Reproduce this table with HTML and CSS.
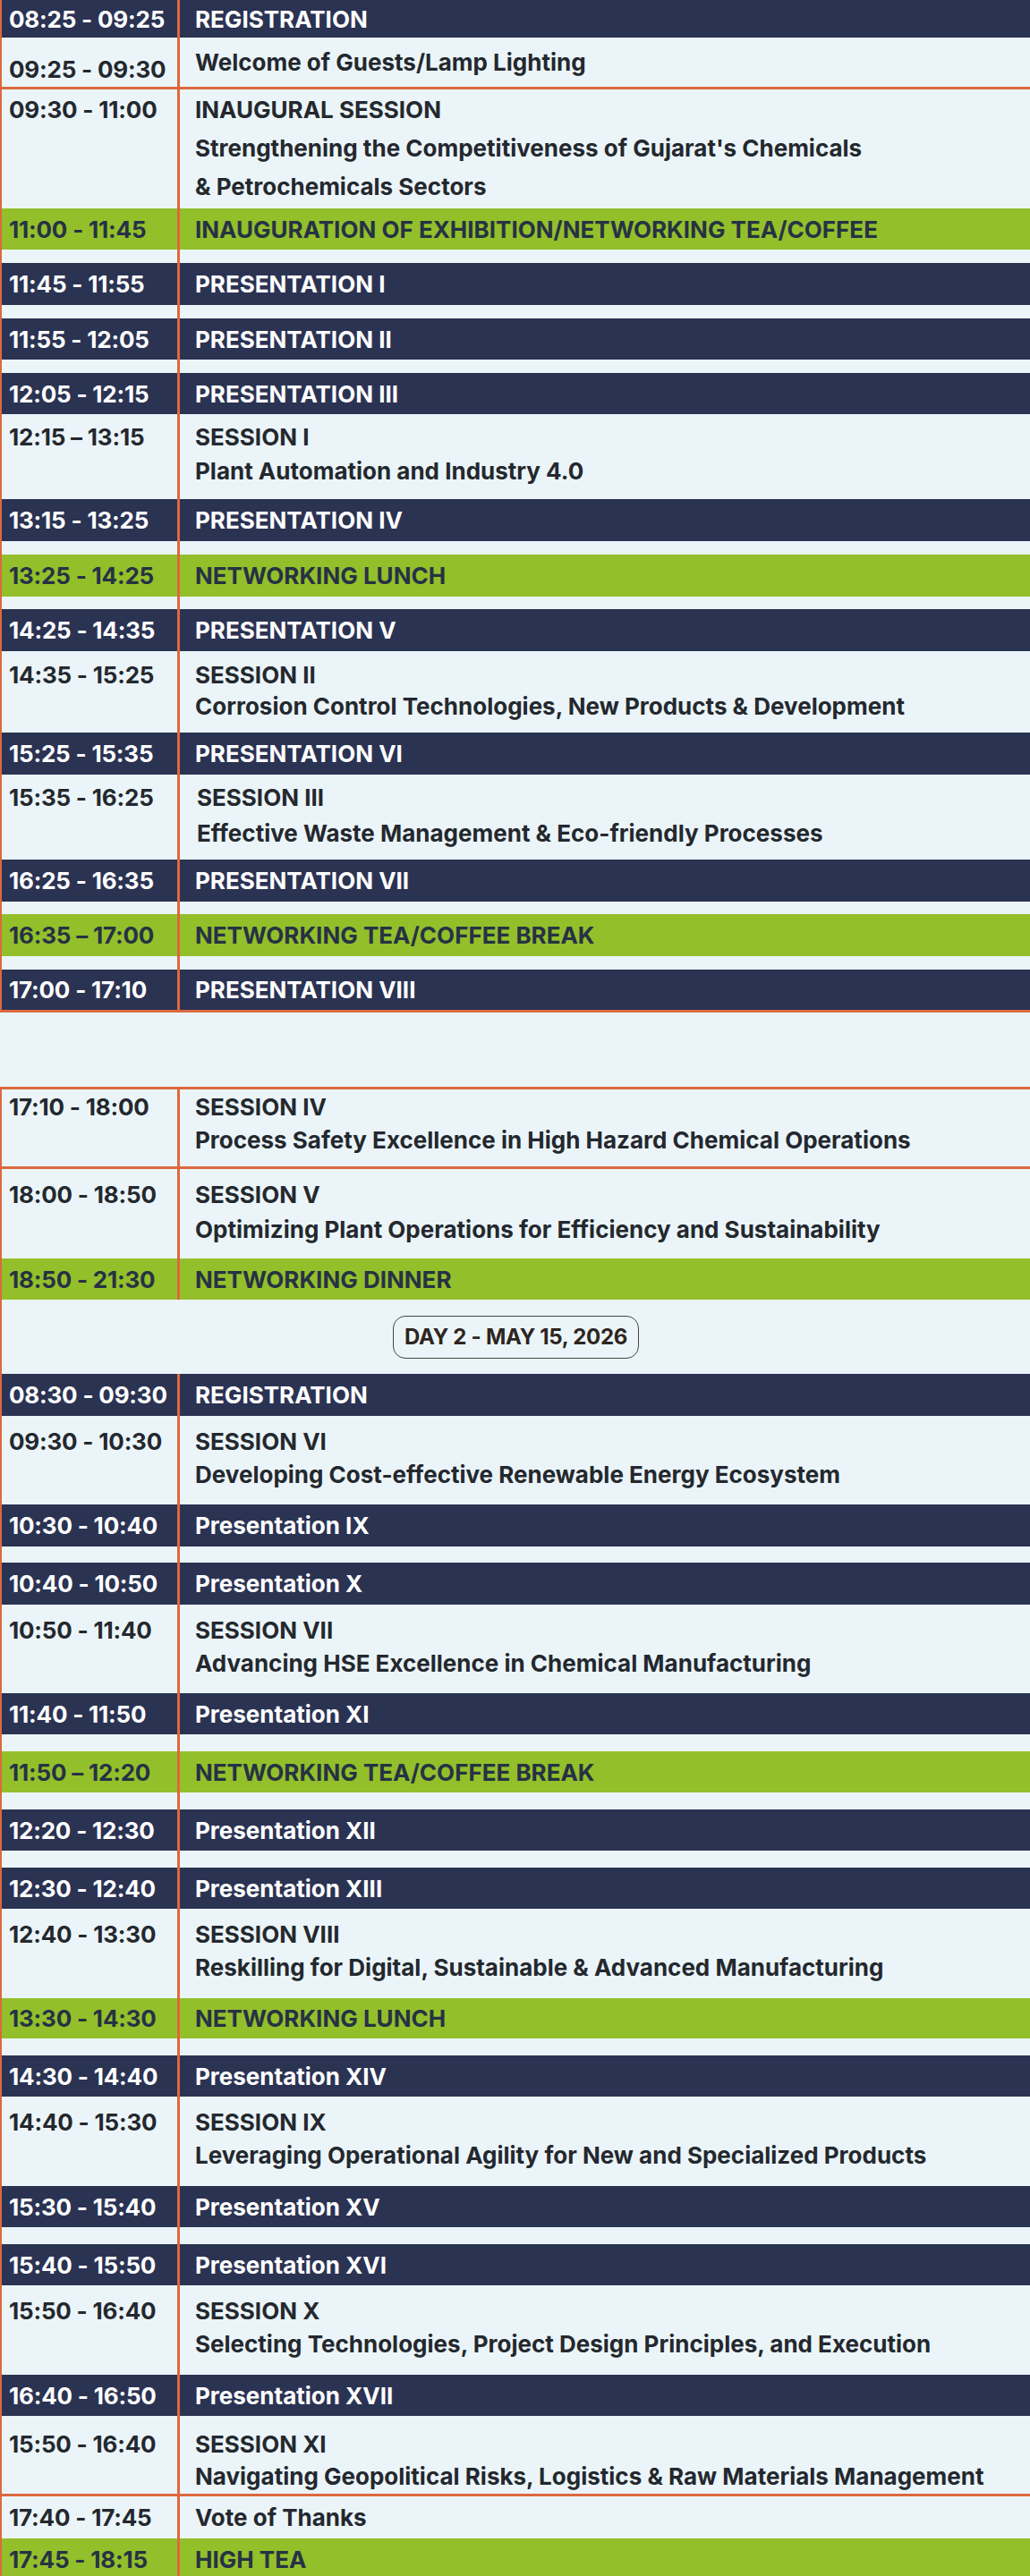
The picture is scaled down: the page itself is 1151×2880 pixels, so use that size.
FILE: index.html
```html
<!DOCTYPE html>
<html lang="en">
<head>
<meta charset="utf-8">
<title>Conference Agenda</title>
<link rel="stylesheet" href="styles.css">
</head>
<body>
<div class="sched day1">
  <div class="row band navy h42"><div class="time">08:25 - 09:25</div><div class="desc">REGISTRATION</div></div>
  <div class="row plain welcome rule"><div class="time low">09:25 - 09:30</div><div class="desc">Welcome of Guests/Lamp Lighting</div></div>
  <div class="row session inaug"><div class="time">09:30 - 11:00</div><div class="desc"><div>INAUGURAL SESSION</div><div>Strengthening the Competitiveness of Gujarat's Chemicals</div><div>&amp; Petrochemicals Sectors</div></div></div>
  <div class="row band green"><div class="time">11:00 - 11:45</div><div class="desc">INAUGURATION OF EXHIBITION/NETWORKING TEA/COFFEE</div></div>
  <div class="gap"></div>
  <div class="row band navy h47"><div class="time">11:45 - 11:55</div><div class="desc">PRESENTATION I</div></div>
  <div class="gap"></div>
  <div class="row band navy"><div class="time">11:55 - 12:05</div><div class="desc">PRESENTATION II</div></div>
  <div class="gap"></div>
  <div class="row band navy"><div class="time">12:05 - 12:15</div><div class="desc">PRESENTATION III</div></div>
  <div class="row session s1"><div class="time">12:15 – 13:15</div><div class="desc"><div>SESSION I</div><div>Plant Automation and Industry 4.0</div></div></div>
  <div class="row band navy h47"><div class="time">13:15 - 13:25</div><div class="desc">PRESENTATION IV</div></div>
  <div class="gap"></div>
  <div class="row band green h47"><div class="time">13:25 - 14:25</div><div class="desc">NETWORKING LUNCH</div></div>
  <div class="gap g14"></div>
  <div class="row band navy h47"><div class="time">14:25 - 14:35</div><div class="desc">PRESENTATION V</div></div>
  <div class="row session s2"><div class="time">14:35 - 15:25</div><div class="desc"><div>SESSION II</div><div>Corrosion Control Technologies, New Products &amp; Development</div></div></div>
  <div class="row band navy h47"><div class="time">15:25 - 15:35</div><div class="desc">PRESENTATION VI</div></div>
  <div class="row session s3"><div class="time">15:35 - 16:25</div><div class="desc shift"><div>SESSION III</div><div>Effective Waste Management &amp; Eco-friendly Processes</div></div></div>
  <div class="row band navy h47"><div class="time">16:25 - 16:35</div><div class="desc">PRESENTATION VII</div></div>
  <div class="gap g14"></div>
  <div class="row band green h47"><div class="time">16:35 – 17:00</div><div class="desc">NETWORKING TEA/COFFEE BREAK</div></div>
  <div class="gap"></div>
  <div class="row band navy h45"><div class="time">17:00 - 17:10</div><div class="desc">PRESENTATION VIII</div></div>
</div>

<div class="sched day2">
  <div class="row session s4 rule"><div class="time">17:10 - 18:00</div><div class="desc"><div>SESSION IV</div><div>Process Safety Excellence in High Hazard Chemical Operations</div></div></div>
  <div class="row session s5"><div class="time">18:00 - 18:50</div><div class="desc"><div>SESSION V</div><div>Optimizing Plant Operations for Efficiency and Sustainability</div></div></div>
  <div class="row band green"><div class="time">18:50 - 21:30</div><div class="desc">NETWORKING DINNER</div></div>
  <div class="day-head"><span class="pill">DAY 2 - MAY 15, 2026</span></div>
  <div class="row band navy h47"><div class="time">08:30 - 09:30</div><div class="desc">REGISTRATION</div></div>
  <div class="row session s6"><div class="time">09:30 - 10:30</div><div class="desc"><div>SESSION VI</div><div>Developing Cost-effective Renewable Energy Ecosystem</div></div></div>
  <div class="row band navy h47"><div class="time">10:30 - 10:40</div><div class="desc">Presentation IX</div></div>
  <div class="gap g18"></div>
  <div class="row band navy h47"><div class="time">10:40 - 10:50</div><div class="desc">Presentation X</div></div>
  <div class="row session s6"><div class="time">10:50 - 11:40</div><div class="desc"><div>SESSION VII</div><div>Advancing HSE Excellence in Chemical Manufacturing</div></div></div>
  <div class="row band navy"><div class="time">11:40 - 11:50</div><div class="desc">Presentation XI</div></div>
  <div class="gap g19"></div>
  <div class="row band green"><div class="time">11:50 – 12:20</div><div class="desc">NETWORKING TEA/COFFEE BREAK</div></div>
  <div class="gap g19"></div>
  <div class="row band navy"><div class="time">12:20 - 12:30</div><div class="desc">Presentation XII</div></div>
  <div class="gap g19"></div>
  <div class="row band navy"><div class="time">12:30 - 12:40</div><div class="desc">Presentation XIII</div></div>
  <div class="row session"><div class="time">12:40 - 13:30</div><div class="desc"><div>SESSION VIII</div><div>Reskilling for Digital, Sustainable &amp; Advanced Manufacturing</div></div></div>
  <div class="row band green h45"><div class="time">13:30 - 14:30</div><div class="desc">NETWORKING LUNCH</div></div>
  <div class="gap g19"></div>
  <div class="row band navy"><div class="time">14:30 - 14:40</div><div class="desc">Presentation XIV</div></div>
  <div class="row session"><div class="time">14:40 - 15:30</div><div class="desc"><div>SESSION IX</div><div>Leveraging Operational Agility for New and Specialized Products</div></div></div>
  <div class="row band navy"><div class="time">15:30 - 15:40</div><div class="desc">Presentation XV</div></div>
  <div class="gap g19"></div>
  <div class="row band navy"><div class="time">15:40 - 15:50</div><div class="desc">Presentation XVI</div></div>
  <div class="row session"><div class="time">15:50 - 16:40</div><div class="desc"><div>SESSION X</div><div>Selecting Technologies, Project Design Principles, and Execution</div></div></div>
  <div class="row band navy"><div class="time">16:40 - 16:50</div><div class="desc">Presentation XVII</div></div>
  <div class="row session s11 rule"><div class="time">15:50 - 16:40</div><div class="desc"><div>SESSION XI</div><div>Navigating Geopolitical Risks, Logistics &amp; Raw Materials Management</div></div></div>
  <div class="row band plain h47"><div class="time">17:40 - 17:45</div><div class="desc">Vote of Thanks</div></div>
  <div class="row band green"><div class="time">17:45 - 18:15</div><div class="desc">HIGH TEA</div></div>
</div>
</body>
</html>
```
FILE: styles.css
```css
:root {
  --navy: #2b3353;
  --green: #93bf2b;
  --light: #ebf5f9;
  --orange: #dc683e;
  --ink: #24282e;
  --green-ink: #263244;
}

* { box-sizing: border-box; }

body {
  margin: 0;
  background: var(--light);
  font-family: Inter, "Noto Sans", sans-serif;
  font-weight: 700;
  font-size: 26px;
  color: var(--ink);
}

.sched {
  border-left: 2px solid var(--orange);
  background:
    linear-gradient(to right, transparent 196px, var(--orange) 196px, var(--orange) 199px, transparent 199px),
    var(--light);
}

.day1 {
  border-bottom: 3px solid var(--orange);
  margin-bottom: 83px;
}

.day2 {
  border-top: 3px solid var(--orange);
}

.row {
  display: grid;
  grid-template-columns: 196px 1fr;
  column-gap: 3px;
  white-space: nowrap;
}

.time { padding-left: 8px; letter-spacing: -0.2px; }
.desc { padding-left: 17px; }
.desc.shift { padding-left: 19px; }

/* single-line coloured bands */
.band { height: 46px; }
.band .time,
.band .desc {
  display: flex;
  align-items: center;
}
.band.h42 { height: 42px; }
.band.h45 { height: 45px; }
.band.h47 { height: 47px; }

.navy .time, .navy .desc { background: var(--navy); color: #fff; }
.green .time, .green .desc { background: var(--green); color: var(--green-ink); }

.navy + .navy .time, .navy + .navy .desc { box-shadow: inset 0 1px 0 #8d9ab4; }

.gap { height: 15px; }
.gap.g14 { height: 14px; }
.gap.g18 { height: 18px; }
.gap.g19 { height: 19px; }

.rule { border-bottom: 3px solid var(--orange); }

/* welcome row */
.welcome { height: 58px; align-items: center; }
.welcome .time.low { padding-top: 16px; }

/* two-line session rows */
.session {
  height: var(--h, 100px);
  padding-top: var(--pt, 10px);
  line-height: var(--lh, 37px);
}
.inaug { --h: 133px; --pt: 1px; --lh: 43px; }
.s1 { --h: 95px; --pt: 7px; --lh: 38px; }
.s2 { --h: 91px; --pt: 9px; --lh: 35px; }
.s3 { --h: 95px; --pt: 6px; --lh: 40px; }
.s4 { --h: 89px; --pt: 1px; --lh: 37px; }
.s5 { --h: 100px; --pt: 9px; --lh: 39px; }
.s6 { --h: 99px; }
.s11 { --h: 90px; --pt: 14px; --lh: 36px; }

/* day header */
.day-head {
  height: 83px;
  background: var(--light);
  display: flex;
  justify-content: center;
  align-items: center;
}
.pill {
  display: inline-flex;
  align-items: center;
  height: 48px;
  padding: 0 12px;
  border: 1.5px solid #444;
  border-radius: 14px;
  font-size: 24px;
  letter-spacing: -0.3px;
  color: #2e2520;
}
```
